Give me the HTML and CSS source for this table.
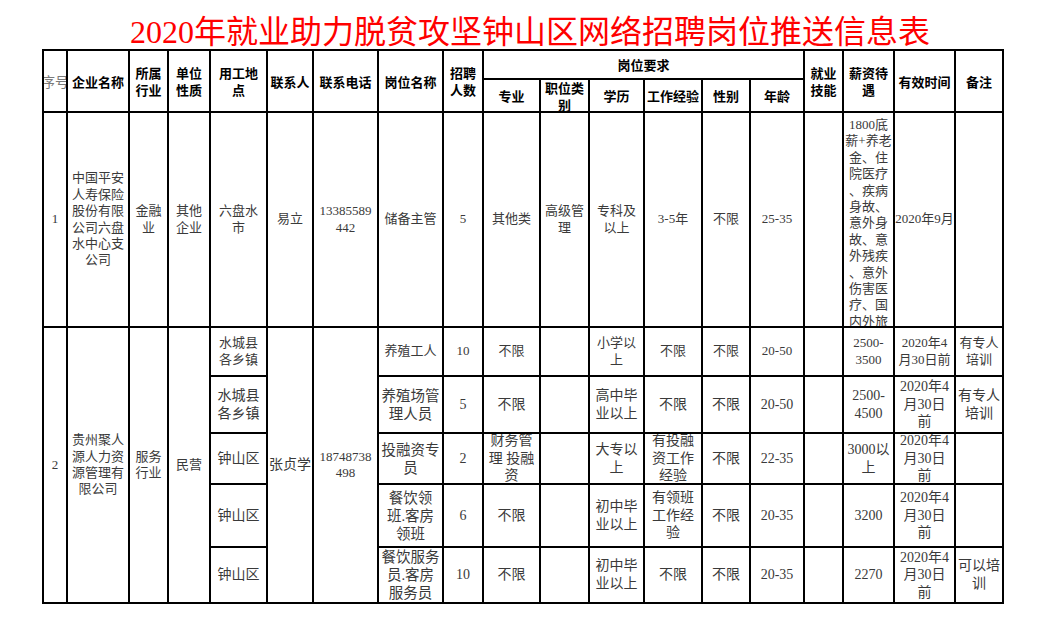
FILE: index.html
```html
<!DOCTYPE html>
<html lang="zh-CN">
<head>
<meta charset="utf-8">
<title>2020年就业助力脱贫攻坚钟山区网络招聘岗位推送信息表</title>
<link rel="stylesheet" href="styles.css">
</head>
<body>
<div class="page">
  <h1 class="title">2020年就业助力脱贫攻坚钟山区网络招聘岗位推送信息表</h1>
  <div class="sheet">
    <!-- header -->
    <div class="td th rs2 seq"><p>序号</p></div>
    <div class="td th rs2"><p>企业名称</p></div>
    <div class="td th rs2"><p>所属<br>行业</p></div>
    <div class="td th rs2"><p>单位<br>性质</p></div>
    <div class="td th rs2"><p>用工地<br>点</p></div>
    <div class="td th rs2"><p>联系人</p></div>
    <div class="td th rs2"><p>联系电话</p></div>
    <div class="td th rs2"><p>岗位名称</p></div>
    <div class="td th rs2"><p>招聘<br>人数</p></div>
    <div class="td th cs6"><p>岗位要求</p></div>
    <div class="td th rs2"><p>就业<br>技能</p></div>
    <div class="td th rs2"><p>薪资待<br>遇</p></div>
    <div class="td th rs2"><p>有效时间</p></div>
    <div class="td th rs2"><p>备注</p></div>
    <div class="td th"><p>专业</p></div>
    <div class="td th"><p>职位类<br>别</p></div>
    <div class="td th"><p>学历</p></div>
    <div class="td th"><p>工作经验</p></div>
    <div class="td th"><p>性别</p></div>
    <div class="td th"><p>年龄</p></div>

    <!-- row 1 -->
    <div class="td"><p>1</p></div>
    <div class="td"><p>中国平安<br>人寿保险<br>股份有限<br>公司六盘<br>水中心支<br>公司</p></div>
    <div class="td"><p>金融<br>业</p></div>
    <div class="td"><p>其他<br>企业</p></div>
    <div class="td"><p>六盘水<br>市</p></div>
    <div class="td"><p>易立</p></div>
    <div class="td"><p>13385589<br>442</p></div>
    <div class="td"><p>储备主管</p></div>
    <div class="td"><p>5</p></div>
    <div class="td"><p>其他类</p></div>
    <div class="td"><p>高级管<br>理</p></div>
    <div class="td"><p>专科及<br>以上</p></div>
    <div class="td"><p>3-5年</p></div>
    <div class="td"><p>不限</p></div>
    <div class="td"><p>25-35</p></div>
    <div class="td"></div>
    <div class="td top"><p>1800底<br>薪+养老<br>金、住<br>院医疗<br>、疾病<br>身故、<br>意外身<br>故、意<br>外残疾<br>、意外<br>伤害医<br>疗、国<br>内外旅</p></div>
    <div class="td"><p>2020年9月</p></div>
    <div class="td"></div>

    <!-- row 2 a -->
    <div class="td rs5"><p>2</p></div>
    <div class="td rs5"><p>贵州聚人<br>源人力资<br>源管理有<br>限公司</p></div>
    <div class="td rs5"><p>服务<br>行业</p></div>
    <div class="td rs5"><p>民营</p></div>
    <div class="td"><p>水城县<br>各乡镇</p></div>
    <div class="td rs5 lg"><p>张贞学</p></div>
    <div class="td rs5"><p>18748738<br>498</p></div>
    <div class="td"><p>养殖工人</p></div>
    <div class="td"><p>10</p></div>
    <div class="td"><p>不限</p></div>
    <div class="td"></div>
    <div class="td"><p>小学以<br>上</p></div>
    <div class="td"><p>不限</p></div>
    <div class="td"><p>不限</p></div>
    <div class="td"><p>20-50</p></div>
    <div class="td"></div>
    <div class="td"><p>2500-<br>3500</p></div>
    <div class="td"><p>2020年4<br>月30日前</p></div>
    <div class="td"><p>有专人<br>培训</p></div>

    <!-- row 2 b -->
    <div class="td lg"><p>水城县<br>各乡镇</p></div>
    <div class="td xl"><p>养殖场管<br>理人员</p></div>
    <div class="td lg"><p>5</p></div>
    <div class="td lg"><p>不限</p></div>
    <div class="td"></div>
    <div class="td lg"><p>高中毕<br>业以上</p></div>
    <div class="td lg"><p>不限</p></div>
    <div class="td lg"><p>不限</p></div>
    <div class="td lg"><p>20-50</p></div>
    <div class="td"></div>
    <div class="td lg"><p>2500-<br>4500</p></div>
    <div class="td lg"><p>2020年4<br>月30日<br>前</p></div>
    <div class="td lg"><p>有专人<br>培训</p></div>

    <!-- row 2 c -->
    <div class="td lg"><p>钟山区</p></div>
    <div class="td xl"><p>投融资专<br>员</p></div>
    <div class="td lg"><p>2</p></div>
    <div class="td lg"><p>财务管<br>理&nbsp;投融<br>资</p></div>
    <div class="td"></div>
    <div class="td lg"><p>大专以<br>上</p></div>
    <div class="td lg"><p>有投融<br>资工作<br>经验</p></div>
    <div class="td lg"><p>不限</p></div>
    <div class="td lg"><p>22-35</p></div>
    <div class="td"></div>
    <div class="td lg"><p>3000以<br>上</p></div>
    <div class="td lg"><p>2020年4<br>月30日<br>前</p></div>
    <div class="td"></div>

    <!-- row 2 d -->
    <div class="td lg"><p>钟山区</p></div>
    <div class="td xl"><p>餐饮领<br>班.客房<br>领班</p></div>
    <div class="td lg"><p>6</p></div>
    <div class="td lg"><p>不限</p></div>
    <div class="td"></div>
    <div class="td lg"><p>初中毕<br>业以上</p></div>
    <div class="td lg"><p>有领班<br>工作经<br>验</p></div>
    <div class="td lg"><p>不限</p></div>
    <div class="td lg"><p>20-35</p></div>
    <div class="td"></div>
    <div class="td lg"><p>3200</p></div>
    <div class="td lg"><p>2020年4<br>月30日<br>前</p></div>
    <div class="td"></div>

    <!-- row 2 e -->
    <div class="td lg"><p>钟山区</p></div>
    <div class="td xl"><p>餐饮服务<br>员.客房<br>服务员</p></div>
    <div class="td lg"><p>10</p></div>
    <div class="td lg"><p>不限</p></div>
    <div class="td"></div>
    <div class="td lg"><p>初中毕<br>业以上</p></div>
    <div class="td lg"><p>不限</p></div>
    <div class="td lg"><p>不限</p></div>
    <div class="td lg"><p>20-35</p></div>
    <div class="td"></div>
    <div class="td lg"><p>2270</p></div>
    <div class="td lg"><p>2020年4<br>月30日<br>前</p></div>
    <div class="td lg"><p>可以培<br>训</p></div>
  </div>
</div>
</body>
</html>
```
FILE: styles.css
```css
html, body {
  margin: 0;
  padding: 0;
  background: #fff;
}

.page {
  padding-left: 42px;
  width: 963px;
}

.title {
  margin: 0;
  height: 49px;
  box-sizing: border-box;
  padding: 15px 0 0 13px;
  line-height: 34px;
  font-size: 32px;
  font-weight: normal;
  color: #ff0000;
  text-align: center;
  white-space: nowrap;
  font-family: "Liberation Serif", "Noto Sans CJK SC", serif;
}

.sheet {
  display: grid;
  grid-template-columns: 22px 60px 37px 40px 55px 44px 63px 63px 38px 55px 47px 53px 56px 46px 52px 37px 49px 59px 46px;
  grid-template-rows: 27px 31px 213px 47px 55px 49px 61px 54px;
  gap: 2px;
  padding: 2px;
  background: #000;
  width: max-content;
}

.td {
  background: #fff;
  display: flex;
  align-items: center;
  justify-content: center;
  overflow: hidden;
  text-align: center;
  white-space: nowrap;
  font-family: "Liberation Serif", "Noto Sans CJK SC", serif;
  font-size: 13px;
  line-height: 16.4px;
  color: #3a3a3a;
}

.td p {
  margin: 0;
}

.th {
  font-family: "Noto Sans CJK SC", sans-serif;
  font-weight: bold;
  color: #000;
  line-height: 17px;
}

.th.seq {
  font-weight: normal;
  color: #7a7a7a;
  font-size: 14px;
}

.lg {
  font-size: 14px;
  line-height: 17.6px;
}

.xl {
  font-size: 14.5px;
  line-height: 18px;
}

.top {
  align-items: flex-start;
  padding-top: 4px;
}

.rs2 { grid-row: span 2; }
.rs5 { grid-row: span 5; }
.cs6 { grid-column: span 6; }
```
